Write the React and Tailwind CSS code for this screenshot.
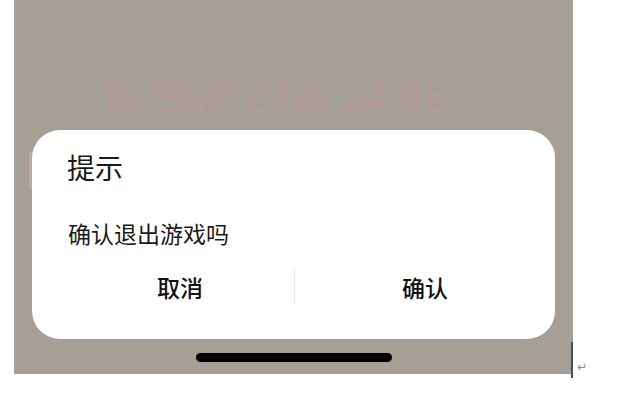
export default function App() {
  return (
    <div className="w-[635px] h-[397px] bg-white relative overflow-hidden" style={{ fontFamily: '"Noto Sans CJK SC", "Noto Sans", sans-serif' }}>
      <div className="ml-[14px] w-[559px] h-[374px] bg-[#a69f96] relative flex flex-col">
        <div className="mt-[74px] ml-[89px] h-[48px] text-[44px] leading-[48px] text-[#b39a9c] tracking-[-0.8px] whitespace-nowrap" style={{ fontFamily: 'Roboto, "Liberation Sans", sans-serif', fontWeight: 400 }}>
          BLEND:ONE 24 35
        </div>
        <div className="absolute left-[15px] top-[152px] w-[3px] h-[38px] bg-[#c2a4a8]" />
        <div className="mt-[8px] ml-[18px] w-[523px] h-[209px] bg-white rounded-[28px] flex flex-col relative">
          <div className="pl-[35px] pt-[19px] text-[28px] leading-[36px] text-[#1a1a1a]">提示</div>
          <div className="pl-[36px] mt-[33px] text-[23px] leading-[30px] text-[#1a1a1a]">确认退出游戏吗</div>
          <div className="flex items-center mt-[21px] h-[36px]">
            <div className="w-[262px] pl-[34px] text-center text-[23px] leading-[30px] text-[#111]" style={{ fontWeight: 500 }}>取消</div>
            <div className="w-px h-[36px] bg-[#e6e6e6]" />
            <div className="flex-1 text-center text-[23px] leading-[30px] text-[#111]" style={{ fontWeight: 500 }}>确认</div>
          </div>
        </div>
        <div className="mt-[14px] ml-[182px] w-[196px] h-[9px] rounded-full bg-black" />
        <div className="absolute right-0 top-[342px] w-[2px] h-[36px] bg-[#4a4f5c]" />
      </div>
      <div className="absolute left-[577px] top-[360px] text-[12px] leading-[14px] text-[#8a8a8a]" style={{ fontFamily: '"DejaVu Sans", sans-serif' }}>↵</div>
    </div>
  );
}
